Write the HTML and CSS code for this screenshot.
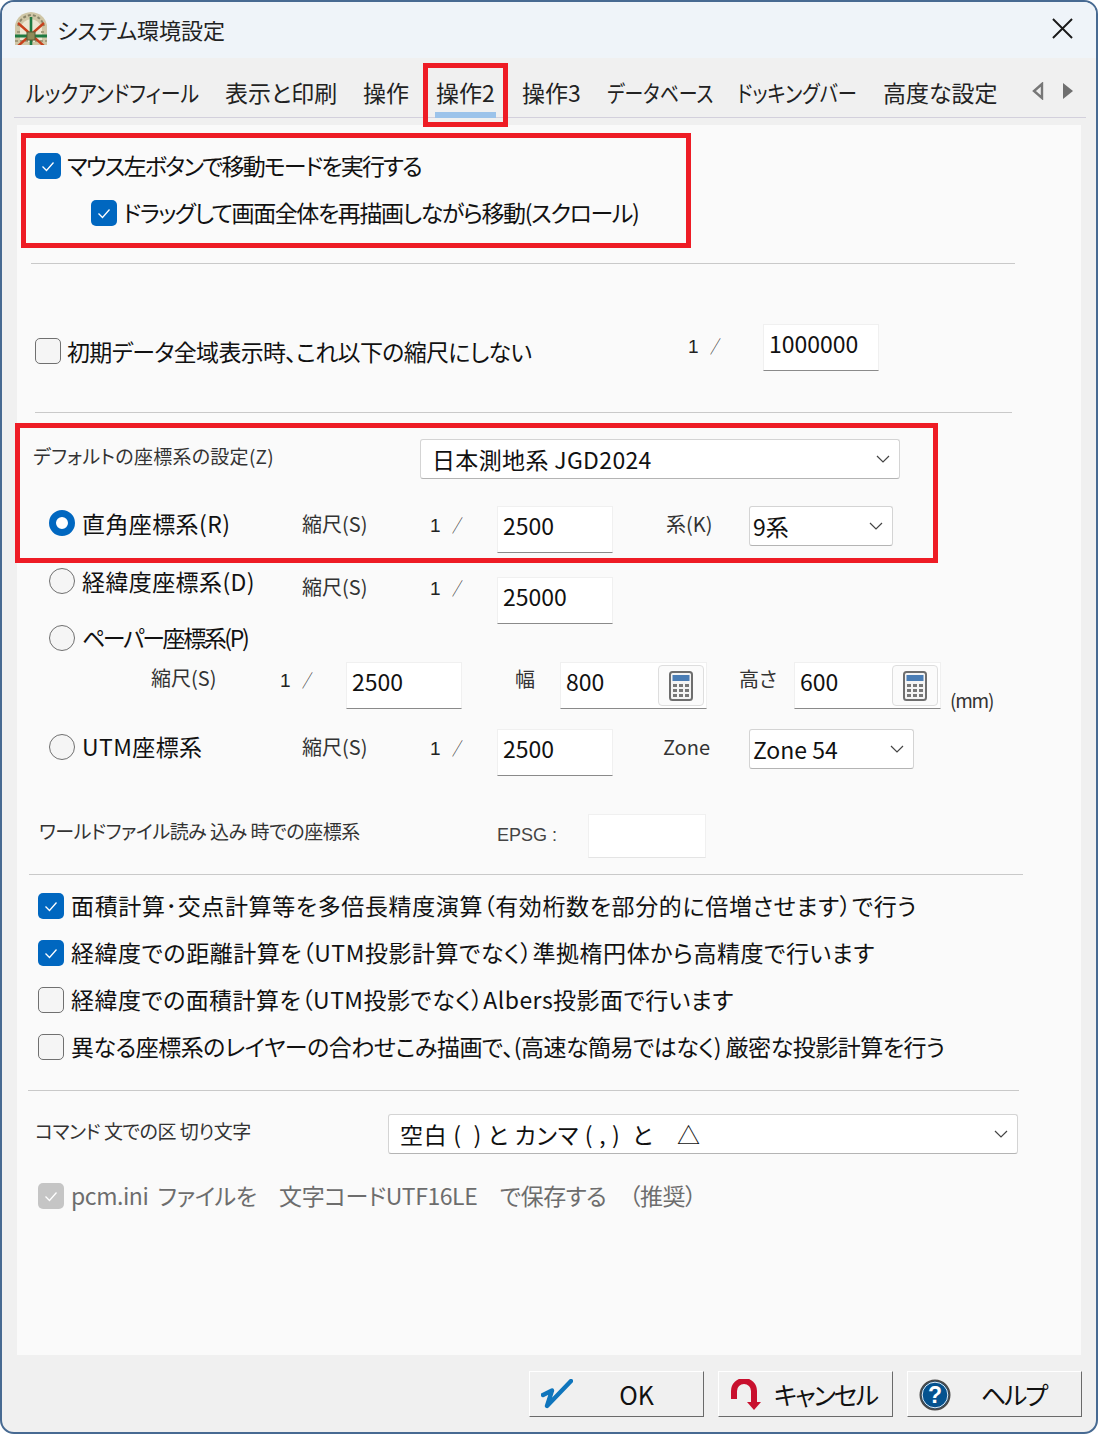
FILE: index.html
```html
<!DOCTYPE html>
<html lang="ja">
<head>
<meta charset="utf-8">
<title>システム環境設定</title>
<link rel="stylesheet" href="styles.css">
</head>
<body>
<svg class="defs" width="0" height="0" aria-hidden="true">
  <symbol id="chev" viewBox="0 0 14 8"><path d="M1 1l6 6 6-6" fill="none" stroke="#444" stroke-width="1.2"/></symbol>
  <symbol id="tick" viewBox="0 0 26 26"><path d="M7.5 13.5l4 4 7-8" fill="none" stroke="#fff" stroke-width="1.3"/></symbol>
  <symbol id="calc" viewBox="0 0 24 30">
    <rect x="1" y="1" width="22" height="28" rx="2.5" fill="#f4f4f4" stroke="#6e6e6e" stroke-width="2"/>
    <rect x="3.5" y="4" width="17" height="6" fill="#4a7db5"/>
    <path d="M4 13h4v3H4zM10 13h4v3h-4zM16 13h4v3h-4zM4 18h4v3H4zM10 18h4v3h-4zM16 18h4v3h-4zM4 23h4v3H4zM10 23h4v3h-4zM16 23h4v3h-4z" fill="#777"/>
  </symbol>
</svg>
<div class="window">
  <header class="titlebar">
    <svg class="logo" viewBox="0 0 32 33" aria-hidden="true">
      <path d="M0 33V13Q3 1 16 0q13 1 16 13v20z" fill="#cfc6a6"/>
      <path d="M3 14Q6 4 16 3q10 1 13 11" fill="none" stroke="#8a866a" stroke-width="2" stroke-dasharray="3 2"/>
      <path d="M5 30V16Q8 8 16 7q8 1 11 9v14z" fill="#ece6d2"/>
      <path d="M0 29h32M2 20h4M26 20h4" stroke="#a49c7c" stroke-width="2" stroke-dasharray="3 2"/>
      <path d="M3 11l26 23M29 11L3 34" stroke="#c7401c" stroke-width="2.4"/>
      <path d="M16 5v28" stroke="#1e7a42" stroke-width="2.6"/>
      <path d="M0 24h32" stroke="#1e7a42" stroke-width="3.2"/>
      <rect x="12" y="20" width="8" height="8" fill="#8f8a58" stroke="#5b5a34"/>
    </svg>
    <div class="title">システム環境設定</div>
    <svg class="close" viewBox="0 0 22 22" aria-hidden="true"><path d="M1 1l20 20M21 1L1 21" stroke="#1a1a1a" stroke-width="2"/></svg>
  </header>

  <nav class="tabs">
    <div class="tab tab-look">ルックアンドフィール</div>
    <div class="tab">表示と印刷</div>
    <div class="tab">操作</div>
    <div class="tab tab-on">操作2</div>
    <div class="tab">操作3</div>
    <div class="tab tab-db">データベース</div>
    <div class="tab tab-dock">ドッキングバー</div>
    <div class="tab">高度な設定</div>
    <div class="arrows">
      <svg viewBox="0 0 12 18" aria-hidden="true"><path d="M10 2L2 9l8 7z" fill="#eee" stroke="#777" stroke-width="2.4"/></svg>
      <svg viewBox="0 0 12 18" aria-hidden="true"><path d="M1 1l10 8-10 8z" fill="#6f6f6f"/></svg>
    </div>
  </nav>

  <main class="panel">
    <div class="check-row cr-first"><span class="box on"><svg><use href="#tick"/></svg></span><span class="txt k1">マウス左ボタンで移動モードを実行する</span></div>
    <div class="check-row cr-second"><span class="box on"><svg><use href="#tick"/></svg></span><span class="txt k2">ドラッグして画面全体を再描画しながら移動(スクロール)</span></div>
    <div class="rule rule-a"></div>

    <div class="row row-init">
      <span class="box off mt14"></span>
      <span class="txt mt15 k3">初期データ全域表示時、これ以下の縮尺にしない</span>
      <span class="frac mt8">1<span class="sl">／</span></span>
      <div class="input w116">1000000</div>
    </div>
    <div class="rule rule-b"></div>

    <div class="row row-default">
      <span class="lbl mt4 k4">デフォルトの座標系の設定(Z)</span>
      <div class="select w480"><span>日本測地系 JGD2024</span><svg><use href="#chev"/></svg></div>
    </div>

    <div class="row coord row-rect">
      <span class="radio on mt4"></span>
      <span class="txt mt5 k5">直角座標系(R)</span>
      <span class="lbl mt5">縮尺(S)</span>
      <span class="frac mt5">1<span class="sl">／</span></span>
      <div class="input w116">2500</div>
      <span class="lbl mt5">系(K)</span>
      <div class="select w144"><span>9系</span><svg><use href="#chev"/></svg></div>
    </div>

    <div class="row coord row-latlon">
      <span class="radio off"></span>
      <span class="txt mt1 k5">経緯度座標系(D)</span>
      <span class="lbl mt6">縮尺(S)</span>
      <span class="frac mt6">1<span class="sl">／</span></span>
      <div class="input w116 mt9">25000</div>
    </div>

    <div class="row coord row-paper">
      <span class="radio off"></span>
      <span class="txt k6">ペーパー座標系(P)</span>
    </div>

    <div class="row row-size">
      <span class="lbl mt3">縮尺(S)</span>
      <span class="frac mt4">1<span class="sl">／</span></span>
      <div class="input w116">2500</div>
      <span class="lbl mt4">幅</span>
      <div class="input w147">800<span class="calc"><svg><use href="#calc"/></svg></span></div>
      <span class="lbl mt4">高さ</span>
      <div class="input w147">600<span class="calc"><svg><use href="#calc"/></svg></span></div>
      <span class="lbl mt25 mm">(mm)</span>
    </div>

    <div class="row coord row-utm">
      <span class="radio off mt5"></span>
      <span class="txt mt5 k5">UTM座標系</span>
      <span class="lbl mt5">縮尺(S)</span>
      <span class="frac mt5">1<span class="sl">／</span></span>
      <div class="input w116">2500</div>
      <span class="lbl mt5 shift">Zone</span>
      <div class="select w165"><span class="tight">Zone 54</span><svg><use href="#chev"/></svg></div>
    </div>

    <div class="row row-world">
      <span class="lbl mt4 k7">ワールドファイル読み 込み 時での座標系</span>
      <span class="epsg mt8">EPSG :</span>
      <div class="input w118"></div>
    </div>
    <div class="rule rule-c"></div>

    <div class="check-row low cr-l1"><span class="box on"><svg><use href="#tick"/></svg></span><span class="txt k8 k8a">面積計算･交点計算等を多倍長精度演算（有効桁数を部分的に倍増させます）で行う</span></div>
    <div class="check-row low cr-l2"><span class="box on"><svg><use href="#tick"/></svg></span><span class="txt k8">経緯度での距離計算を（UTM投影計算でなく）準拠楕円体から高精度で行います</span></div>
    <div class="check-row low cr-l2"><span class="box off"></span><span class="txt k8b">経緯度での面積計算を（UTM投影でなく）Albers投影面で行います</span></div>
    <div class="check-row low cr-l2"><span class="box off"></span><span class="txt k10">異なる座標系のレイヤーの合わせこみ描画で､(高速な簡易ではなく) 厳密な投影計算を行う</span></div>
    <div class="rule rule-d"></div>

    <div class="row row-cmd">
      <span class="lbl mt4 k7">コマンド 文での区 切り文字</span>
      <div class="select w630"><span class="sel-cmd">空白 (  ) と カンマ ( , )  と　△</span><svg><use href="#chev"/></svg></div>
    </div>

    <div class="check-row low cr-dis"><span class="box dis"><svg><use href="#tick"/></svg></span><span class="txt grey k9">pcm.ini&nbsp; ファイルを　文字コードUTF16LE　で保存する　（推奨）</span></div>
  </main>

  <footer class="footer">
    <div class="btn">
      <svg class="ico ico-ok" viewBox="0 0 32 30" aria-hidden="true"><path d="M2 16l9-4.500L6 27 30 2" fill="none" stroke="#0f75bc" stroke-width="4.400" stroke-linecap="round" stroke-linejoin="round"/></svg>
      <span class="btn-t">OK</span>
    </div>
    <div class="btn">
      <svg class="ico ico-cancel" viewBox="0 0 32 32" aria-hidden="true"><path d="M4 20V12a10 10 0 0 1 20 0v12" fill="none" stroke="#c8102e" stroke-width="6"/><path d="M17 23h14l-7 8z" fill="#c8102e"/></svg>
      <span class="btn-t">キャンセル</span>
    </div>
    <div class="btn">
      <svg class="ico ico-help" viewBox="0 0 32 32" aria-hidden="true"><circle cx="16" cy="16" r="14.5" fill="#04528f" stroke="#4a4a4a" stroke-width="2"/><circle cx="16" cy="16" r="12.8" fill="none" stroke="#dfe8f0" stroke-width="1"/><text x="16" y="24" text-anchor="middle" class="q">?</text></svg>
      <span class="btn-t">ヘルプ</span>
    </div>
  </footer>

  <div class="red red-tab"></div>
  <div class="red red-move"></div>
  <div class="red red-coord"></div>
</div>
</body>
</html>
```

FILE: styles.css
```css
* { box-sizing: border-box; }
html, body { margin: 0; padding: 0; background: #fff; }
body { width: 1098px; height: 1434px; overflow: hidden; }
.defs { position: absolute; }

.window {
  position: relative;
  width: 1098px;
  height: 1434px;
  border: 2px solid #476a92;
  border-radius: 14px;
  overflow: hidden;
  background: #f0f0f0;
  font-family: "Noto Sans CJK JP", "Noto Sans", sans-serif;
  font-feature-settings: "palt";
  color: #111;
}

.titlebar {
  height: 56px;
  background: #eff4f9;
  display: flex;
  align-items: center;
  padding: 0 23px 3px 13px;
}
.logo { width: 32px; height: 33px; flex: none; }
.title { margin-left: 10px; font-size: 22px; line-height: 28px; color: #222; flex: 1; }
.close { width: 21px; height: 21px; }

.tabs {
  position: relative;
  height: 60px;
  margin: 0 10px 0 12px;
  border-bottom: 1px solid #d3d0dc;
  display: grid;
  grid-template-columns: 199px 138px 73px 86px 85px 130px 146px 149px auto;
  padding-left: 12px;
}
.tab { font-size: 23px; line-height: 28px; padding-top: 20px; white-space: nowrap; color: #222; transform-origin: left center; }
.tab-look { transform: scaleX(0.865); }
.tab-db { transform: scaleX(0.82); }
.tab-dock { transform: scaleX(0.84); }
.tab-on { position: relative; }
.tab-on::after {
  content: "";
  position: absolute;
  left: -1px;
  top: 54px;
  width: 61px;
  height: 6px;
  background: #9cc3ea;
}
.arrows { display: flex; gap: 18px; padding-top: 24px; }
.arrows svg { width: 12px; height: 18px; }

.panel {
  width: 1064px;
  height: 1230px;
  margin: 7px 0 0 15px;
  padding-top: 28px;
  background: #fafafa;
}

.check-row { display: flex; height: 26px; gap: 6px; padding-left: 18px; }
.cr-second { margin-top: 21px; padding-left: 74px; }
.check-row.low { padding-left: 21px; gap: 7px; }
.cr-l1 { margin-top: 18px; }
.cr-l2 { margin-top: 21px; }
.cr-dis { margin-top: 29px; }

.box { display: block; flex: none; width: 26px; height: 26px; border-radius: 5px; }
.box svg { display: block; width: 26px; height: 26px; }
.box.on { background: #0067c0; }
.box.off { background: #f5f5f5; border: 1.5px solid #707070; }
.box.dis { background: #c5c5c5; }

.radio { display: block; width: 26px; height: 26px; border-radius: 50%; }
.radio.on { background: #fff; border: 7.5px solid #0067c0; }
.radio.off { background: #f5f5f5; border: 1.5px solid #707070; }

.txt { font-size: 23px; line-height: 25px; white-space: nowrap; color: #111; }
.grey { color: #6d6d6d; }
.lbl { font-size: 20px; line-height: 26px; white-space: nowrap; color: #333; margin-left: -1px; }
.mm { letter-spacing: -1.2px; font-size: 19px; margin-left: -1px; }
.frac { font-family: "Liberation Sans", sans-serif; font-size: 19px; line-height: 26px; white-space: nowrap; color: #222; font-feature-settings: normal; }
.sl { display: inline-block; margin-left: 11px; font-family: "Noto Sans CJK JP", sans-serif; font-size: 18px; line-height: 26px; transform: scaleX(0.6); transform-origin: left center; }
.epsg { font-size: 18px; line-height: 26px; color: #444; font-family: "Liberation Sans", sans-serif; }

.k1 { letter-spacing: -1.8px; }
.k2 { letter-spacing: -1.4px; }
.k3 { letter-spacing: -0.7px; }
.k4 { letter-spacing: 0.28px; font-size: 19px; }
.k5 { letter-spacing: 0.4px; }
.k6 { letter-spacing: -2.4px; }
.k7 { letter-spacing: -0.45px; font-size: 19px; }
.k8 { letter-spacing: 0.55px; }
.k8a { letter-spacing: 0.63px; }
.k8b { letter-spacing: 0.45px; }
.k9 { letter-spacing: -0.43px; }
.k10 { letter-spacing: -0.5px; }
.shift { margin-left: -4px; }

.mt1 { margin-top: 1px; }
.mt3 { margin-top: 3px; }
.mt4 { margin-top: 4px; }
.mt5 { margin-top: 5px; }
.mt6 { margin-top: 6px; }
.mt8 { margin-top: 8px; }
.mt9 { margin-top: 9px; }
.mt14 { margin-top: 14px; }
.mt15 { margin-top: 15px; }
.mt25 { margin-top: 25px; }

.rule { height: 1px; background: #c9c9c9; }
.rule-a { margin: 37px 0 0 14px; width: 984px; }
.rule-b { margin: 41px 0 0 18px; width: 977px; }
.rule-c { margin: 16px 0 0 12px; width: 994px; }
.rule-d { margin: 30px 0 0 11px; width: 991px; }

.row { display: grid; align-items: start; }
.row-init { margin-top: 60px; height: 47px; padding-left: 18px; grid-template-columns: 32px 621px 75px auto; }
.row-default { margin-top: 26px; height: 40px; padding-left: 17px; grid-template-columns: 386px auto; }
.coord { padding-left: 32px; grid-template-columns: 33px 221px 127px 67px 170px 82px auto; }
.row-rect { margin-top: 27px; height: 46px; }
.row-latlon { margin-top: 16px; height: 55px; }
.row-paper { margin-top: 2px; height: 26px; }
.row-size { margin-top: 11px; height: 46px; padding-left: 135px; grid-template-columns: 128px 66px 170px 44px 180px 54px 157px auto; }
.row-utm { margin-top: 21px; height: 46px; }
.row-world { margin-top: 39px; height: 44px; padding-left: 23px; grid-template-columns: 457px 91px auto; }
.row-cmd { margin-top: 23px; height: 40px; padding-left: 19px; grid-template-columns: 352px auto; }

.input {
  position: relative;
  height: 47px;
  background: #fff;
  border: 1px solid #f0f0f0;
  border-bottom: 1px solid #8a8a8a;
  font-size: 23px;
  line-height: 37px;
  padding-left: 5px;
  color: #111;
}
.row-world .input { height: 44px; border-bottom-color: #e4e4e4; }
.w116 { width: 116px; }
.w118 { width: 118px; }
.w147 { width: 147px; }
.calc {
  position: absolute;
  right: 2px;
  top: 2px;
  width: 46px;
  height: 41px;
  background: #fbfbfb;
  border: 1px solid #dedede;
  border-radius: 4px;
  display: flex;
  align-items: center;
  justify-content: center;
}
.calc svg { width: 24px; height: 30px; }

.select {
  height: 40px;
  background: #fff;
  border: 1px solid #d4d4d4;
  border-bottom-color: #b4b4b4;
  border-radius: 3px;
  display: flex;
  align-items: center;
  justify-content: space-between;
  padding: 0 9px 0 3px;
  font-size: 23px;
  white-space: pre;
  color: #111;
}
.select svg { width: 14px; height: 8px; flex: none; }
.w480 { width: 480px; }
.w480 span { padding-left: 8px; letter-spacing: 0.35px; }
.w144 { width: 144px; }
.w165 { width: 165px; }
.w630 { width: 630px; }
.sel-cmd { padding-left: 8px; letter-spacing: 0.7px; }

.footer { display: flex; justify-content: flex-end; gap: 14px; padding: 16px 14px 0 0; }
.btn {
  position: relative;
  width: 175px;
  height: 46px;
  background: #f0f0f0;
  border: 1px solid;
  border-color: #fff #6a6a6a #6a6a6a #fff;
  display: flex;
  align-items: center;
  justify-content: flex-end;
}
.btn-t { font-size: 25px; line-height: 28px; margin-top: -1px; color: #111; }
.btn:nth-child(1) .btn-t { margin-right: 49px; }
.btn:nth-child(2) .btn-t { margin-right: 15px; letter-spacing: -2px; }
.btn:nth-child(3) .btn-t { margin-right: 35px; letter-spacing: -2.2px; }
.ico { position: absolute; }
.ico-ok { left: 11px; top: 7px; width: 32px; height: 30px; }
.ico-cancel { left: 11px; top: 7px; width: 32px; height: 32px; }
.ico-help { left: 11px; top: 7px; width: 32px; height: 32px; }
.q { font: bold 23px "Liberation Sans", sans-serif; fill: #fff; }

.red { position: absolute; border: 5px solid #ee1c25; pointer-events: none; }
.red-tab { left: 421px; top: 61px; width: 85px; height: 64px; }
.red-move { left: 19px; top: 131px; width: 670px; height: 115px; }
.red-coord { left: 13px; top: 421px; width: 923px; height: 140px; }
```
